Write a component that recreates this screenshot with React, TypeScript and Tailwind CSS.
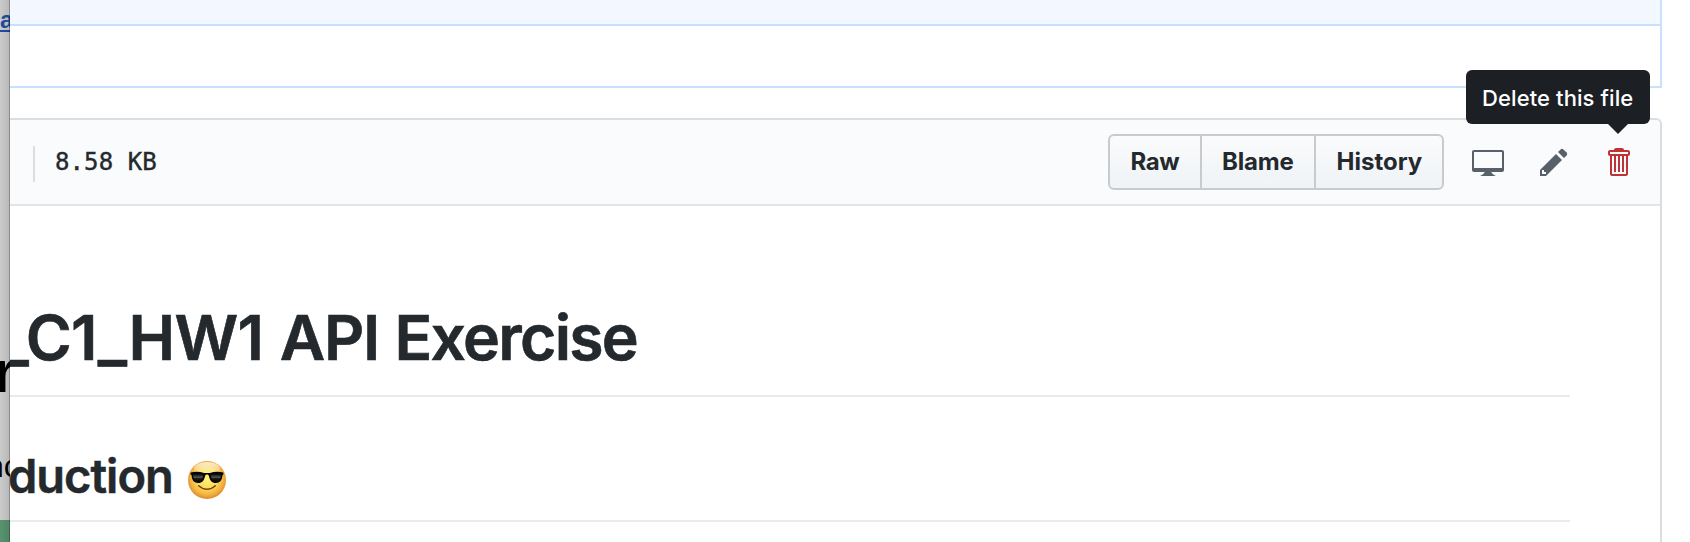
const sans = "font-['Inter','Liberation_Sans',sans-serif]";

function BackgroundWindow() {
  return (
    <aside className="relative h-[542px] w-[10px] shrink-0 overflow-hidden bg-[#cbcbcb] font-['Liberation_Sans',sans-serif]">
      <span className="absolute left-0 top-[8px] text-[24px] leading-[24px] font-bold text-[#1c4fa1]">a</span>
      <span className="absolute left-0 top-[30px] h-[2px] w-full bg-[#1c4fa1]" />
      <span className="absolute left-[-7px] top-[341px] text-[60px] leading-[62px] font-bold text-black">r</span>
      <span className="absolute left-[-14px] top-[450px] text-[32px] leading-[32px] text-black">nc</span>
      <span className="absolute left-0 top-[520px] h-[22px] w-full bg-[#58936f]" />
      <span className="absolute inset-0 bg-linear-to-r from-transparent to-black/10" />
      <span className="absolute right-0 top-0 h-full w-px bg-black/25" />
    </aside>
  );
}

function SunglassesEmoji() {
  return (
    <svg viewBox="0 0 38 38" className="ml-[15px] mt-[15px] size-[38px]" role="img">
      <defs>
        <radialGradient id="face" cx="50%" cy="46%" r="54%">
          <stop offset="0" stopColor="#fff27a" />
          <stop offset=".5" stopColor="#fbdb58" />
          <stop offset=".82" stopColor="#f2ae3c" />
          <stop offset="1" stopColor="#d98a32" />
        </radialGradient>
        <linearGradient id="shine" x1="0" y1="0" x2="0" y2="1">
          <stop offset="0" stopColor="#fff" stopOpacity=".75" />
          <stop offset="1" stopColor="#fff" stopOpacity="0" />
        </linearGradient>
        <linearGradient id="lens" x1="0" y1="0" x2="0" y2="1">
          <stop offset="0" stopColor="#000" />
          <stop offset=".45" stopColor="#555" />
          <stop offset=".6" stopColor="#1b1b1b" />
          <stop offset="1" stopColor="#000" />
        </linearGradient>
      </defs>
      <circle cx="19" cy="19" r="19" fill="url(#face)" />
      <ellipse cx="19" cy="8" rx="13" ry="7" fill="url(#shine)" />
      <path d="M2.6 11.4c5-1 9.500-.8 13.400.6h6c3.900-1.400 8.400-1.600 13.400-.6v2l-1 .8c-.4 5-2.400 7.700-6.600 7.700-4 0-5.900-2.600-6.900-7-.3-1-.9-1.500-1.900-1.500s-1.600.5-1.900 1.500c-1 4.400-2.900 7-6.900 7-4.200 0-6.200-2.700-6.600-7.700l-1-.8z" fill="#050505" />
      <path d="M5 13.200c3-.7 7-.5 10.300.6-.7 4.700-2 6.900-5.200 6.900-3.400 0-4.900-2.400-5.100-7.500zM33 13.200c-3-.7-7-.5-10.300.6.7 4.700 2 6.900 5.200 6.900 3.400 0 4.900-2.400 5.100-7.500z" fill="url(#lens)" />
      <path d="M10.600 24.800c5 4.600 11.800 4.600 16.800 0" fill="none" stroke="#7a421a" strokeWidth="1.500" strokeLinecap="round" />
    </svg>
  );
}

function FileToolbar() {
  return (
    <div className="flex h-[86px] items-start rounded-tr-[5px] border-b-2 border-[#e1e4e8] bg-[#fafbfd]">
      <span className="ml-[23px] mt-[26px] h-[36px] w-[2px] bg-[#dcdde0]" />
      <span className="ml-[20px] mt-[26px] font-['DejaVu_Sans_Mono',monospace] text-[24px] leading-[32px] tracking-[0.100px] whitespace-pre text-[#24292e] [-webkit-text-stroke:0.4px_#24292e]">8.58 KB</span>
      <div className="ml-auto mt-[14px] flex h-[56px] w-[336px] rounded-[6px] border-2 border-[#c8cacc] bg-linear-to-b from-[#fafbfc] to-[#eff3f6] text-[24px] font-bold text-[#24292e]">
        <button className="w-[92px] border-r-2 border-[#c8cacc] pb-[1px] pl-[20.500px] text-left leading-[47px] tracking-[-0.400px]">Raw</button>
        <button className="w-[114px] border-r-2 border-[#c8cacc] pb-[1px] pl-[20px] text-left leading-[47px] tracking-[-0.150px]">Blame</button>
        <button className="flex-1 pb-[1px] pl-[20.500px] text-left leading-[47px] tracking-[0]">History</button>
      </div>
      <div className="mt-[26px] flex pl-[28px] text-[#586069]">
        <svg viewBox="0 0 16 16" className="h-[32px] w-[32px]" fill="currentColor">
          <path fillRule="evenodd" d="M15 2H1c-.55 0-1 .45-1 1v9c0 .55.45 1 1 1h5.340c-.25.61-.86 1.390-2.340 2h8c-1.480-.61-2.090-1.390-2.340-2H15c.55 0 1-.45 1-1V3c0-.55-.45-1-1-1zm0 9H1V3h14v8z" />
        </svg>
        <svg viewBox="0 0 14 16" className="ml-[36px] h-[32px] w-[28px]" fill="currentColor">
          <path fillRule="evenodd" d="M0 12v3h3l8-8-3-3-8 8zm3 2H1v-2h1v1h1v1zm10.300-9.300L12 6 9 3l1.300-1.300a.996.996 0 0 1 1.410 0l1.590 1.590c.39.39.39 1.020 0 1.410z" />
        </svg>
        <div className="relative mr-[30px] ml-[38px] h-[32px] w-[24px] text-[#bf3336]">
          <svg viewBox="0 0 12 16" className="h-[32px] w-[24px]" fill="currentColor">
            <path fillRule="evenodd" d="M11 2H9c0-.55-.45-1-1-1H5c-.55 0-1 .45-1 1H2c-.55 0-1 .45-1 1v1c0 .55.45 1 1 1v9c0 .55.45 1 1 1h7c.55 0 1-.45 1-1V5c.55 0 1-.45 1-1V3c0-.55-.45-1-1-1zm-1 12H3V5h1v8h1V5h1v8h1V5h1v8h1V5h1v9zm1-10H2V3h9v1z" />
          </svg>
          <div className="absolute -top-[76px] -right-[20px] h-[54px] w-[184px] rounded-[6px] bg-[#1c1f24] pl-[16px] text-[22px] leading-[56px] font-medium tracking-[0.100px] whitespace-nowrap text-white">
            Delete this file
            <svg viewBox="0 0 20 10" className="absolute top-[54px] left-[142px] h-[10px] w-[20px]">
              <path d="M0 0h20L10 10z" fill="#1c1f24" />
            </svg>
          </div>
        </div>
      </div>
    </div>
  );
}

export default function App() {
  return (
    <div className={`flex h-[542px] w-[1690px] overflow-hidden bg-white text-[#24292e] ${sans}`}>
      <BackgroundWindow />
      <main className="flex h-[542px] w-[1652px] flex-col">
        <section className="h-[88px] shrink-0 border-r-2 border-b-2 border-[#c8e0fd]">
          <div className="h-[26px] border-b-2 border-[#c8e0fd] bg-[#f3f7ff]" />
        </section>
        <section className="mt-[30px] h-[424px] shrink-0 rounded-tr-[6px] border-t-2 border-r-2 border-[#dddddd]">
          <FileToolbar />
          <article className="mr-[90px]">
            <h1 className="h-[191px] overflow-hidden border-b-2 border-[#eaebef] pt-[90px] text-[62.500px] leading-[82px] font-semibold whitespace-nowrap [-webkit-text-stroke:0.6px_#24292e]">
              <span className="-ml-[10.500px] tracking-[-0.650px]">_C1_HW1 </span>
              <span className="ml-[1.500px] tracking-[-1.300px]">API </span>
              <span className="ml-[1px] tracking-[-1.750px]">Exercise</span>
            </h1>
            <h2 className="flex h-[125px] border-b-2 border-[#eaebef] pt-[49px] text-[47px] leading-[60px] font-semibold whitespace-nowrap [-webkit-text-stroke:0.5px_#24292e]">
              <span className="-ml-[2px] tracking-[-1px]">duction</span>
              <SunglassesEmoji />
            </h2>
          </article>
        </section>
      </main>
    </div>
  );
}
